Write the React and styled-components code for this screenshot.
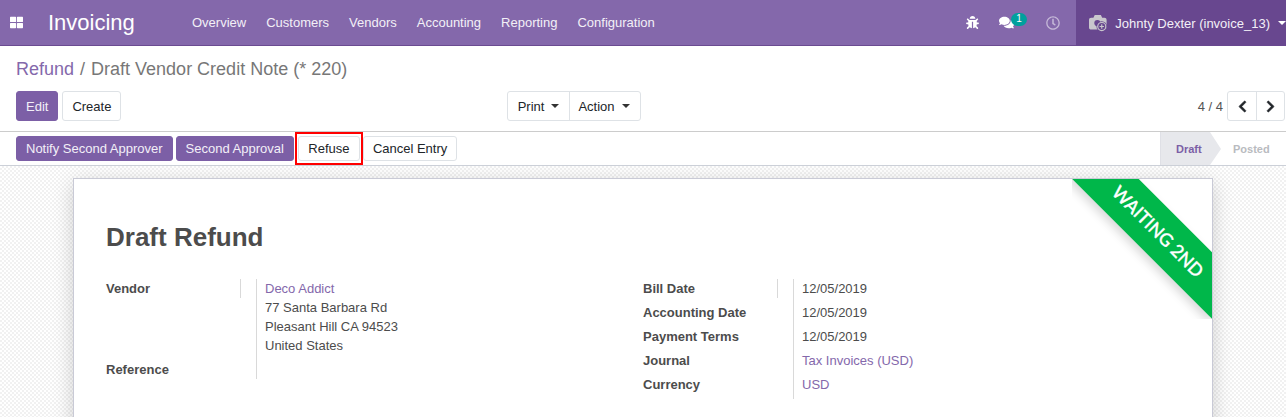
import React from 'react';
import styled, { createGlobalStyle } from 'styled-components';
import { FaBug, FaComments, FaRegClock, FaThLarge, FaChevronLeft, FaChevronRight } from 'react-icons/fa';

const GlobalStyle = createGlobalStyle`
  html, body {
    margin: 0;
    height: 417px;
    overflow: hidden;
    font-family: "Liberation Sans", Arial, sans-serif;
    font-size: 13px;
    color: #4c4c4c;
    background: #fff;
  }
  * { box-sizing: border-box; }
`;

const Navbar = styled.header`
  display: flex;
  align-items: stretch;
  height: 46px;
  background: #8468ab;
  border-bottom: 1px solid #6b4b91;
  color: #fff;
`;

const AppsIcon = styled.span`
  display: flex;
  align-items: center;
  padding-left: 10px;
  width: 48px;
  font-size: 13px;
`;

const Brand = styled.span`
  align-self: center;
  width: 144px;
  font-size: 22px;
  line-height: 24px;
`;

const Menu = styled.nav`
  display: flex;
  align-items: center;
  column-gap: 20px;
  flex: 1;
`;

const MenuItem = styled.span`
  font-size: 13px;
  color: #f3f0f7;
`;

const Systray = styled.div`
  display: flex;
  align-items: center;
  width: 110px;
  position: relative;
`;

const TrayIcon = styled.span`
  position: relative;
  display: flex;
  margin-left: ${(p) => p.$left}px;
  color: ${(p) => p.$color || '#fff'};
  font-size: ${(p) => p.$size || 13}px;
`;

const Badge = styled.span`
  position: absolute;
  top: -2px;
  left: 12px;
  width: 16px;
  height: 13px;
  border-radius: 7px;
  background: #00a09d;
  color: #fff;
  font-size: 10px;
  line-height: 12px;
  text-align: center;
`;

const UserMenu = styled.div`
  display: flex;
  align-items: center;
  width: 210px;
  padding-left: 13px;
  background: #68478f;
  color: #f3f0f7;
  margin-bottom: -1px;
  white-space: nowrap;
`;

const UserName = styled.span`
  margin-left: 7px;
`;

const Caret = styled.span`
  display: inline-block;
  width: 0;
  height: 0;
  margin-left: ${(p) => p.$left || 7}px;
  border-top: 4px solid ${(p) => p.$color || '#333'};
  border-left: 4px solid transparent;
  border-right: 4px solid transparent;
  vertical-align: middle;
`;

const ControlPanel = styled.section`
  height: 86px;
  padding: 0 1px 0 16px;
  background: #fff;
  border-bottom: 1px solid #ccc;
`;

const Breadcrumb = styled.div`
  padding-top: 13px;
  height: 45px;
  font-size: 18px;
  line-height: 20px;
  color: #777;
`;

const CrumbLink = styled.span`
  color: #8468ab;
`;

const CrumbSep = styled.span`
  margin: 0 6px;
`;

const ButtonRow = styled.div`
  display: grid;
  grid-template-columns: 491px auto 1fr;
  align-items: center;
`;

const Group = styled.div`
  display: flex;
  justify-content: ${(p) => p.$end ? 'flex-end' : 'flex-start'};
  align-items: center;
  column-gap: ${(p) => p.$gap || 0}px;
`;

const Button = styled.button`
  height: ${(p) => p.$h || 30}px;
  min-width: ${(p) => p.$min || 0}px;
  padding: 0 9px;
  font: inherit;
  border-radius: 3px;
  border: 1px solid ${(p) => p.$primary ? '#7c5fa6' : '#dee2e6'};
  background: ${(p) => p.$primary ? '#7c5fa6' : '#fff'};
  color: ${(p) => p.$primary ? '#f3eff8' : '#212529'};
  white-space: nowrap;
`;

const Joined = styled.div`
  display: flex;
  border: 1px solid #dee2e6;
  border-radius: 3px;
`;

const JoinedCell = styled.span`
  display: flex;
  align-items: center;
  justify-content: center;
  height: 28px;
  width: ${(p) => p.$w}px;
  padding-right: ${(p) => p.$pr || 0}px;
  color: #212529;
  font-size: ${(p) => p.$size || 13}px;
  & + & { border-left: 1px solid #dee2e6; }
  svg {
    stroke: currentColor;
    stroke-width: 24;
  }
`;

const Pager = styled.span`
  margin-right: 4px;
  color: #555;
`;

const StatusBar = styled.section`
  display: flex;
  justify-content: space-between;
  height: 34px;
  padding-left: 16px;
  background: #fff;
  border-bottom: 1px solid #ccd0d8;
`;

const ActionButtons = styled.div`
  display: flex;
  align-items: center;
  column-gap: 3px;
`;

const Highlight = styled.span`
  display: flex;
  padding: 2px 1px;
  margin-left: -2px;
  margin-right: -3px;
  border: 2px solid #f00;
`;

const Steps = styled.div`
  display: flex;
  width: 126px;
  font-size: 11px;
  font-weight: 700;
`;

const ActiveStep = styled.span`
  position: relative;
  display: flex;
  align-items: center;
  width: 50px;
  padding-left: 15px;
  background: #e7e8ec;
  border-left: 1px solid #dfe0e6;
  color: #7c5fa6;
  &::after {
    content: '';
    position: absolute;
    top: 0;
    left: 49px;
    border-left: 11px solid #e7e8ec;
    border-top: 17px solid transparent;
    border-bottom: 16px solid transparent;
  }
`;

const IdleStep = styled.span`
  display: flex;
  align-items: center;
  padding-left: 23px;
  color: #b9bbc0;
`;

const SheetArea = styled.main`
  height: 251px;
  padding: 13px 73px 0 73px;
  background-color: #fff;
  background-image: repeating-conic-gradient(#f1f1f1 0 25%, #fff 0 50%);
  background-size: 4px 4px;
  overflow: hidden;
`;

const Sheet = styled.article`
  position: relative;
  height: 300px;
  margin-top: -1px;
  padding: 41px 32px 0 32px;
  background: #fff;
  border: 1px solid #c9cad6;
  box-shadow: 0 5px 20px -1px rgba(0, 0, 0, 0.2);
`;

const RibbonClip = styled.div`
  position: absolute;
  top: 0;
  right: 0;
  width: 140px;
  height: 140px;
  overflow: hidden;
`;

const Ribbon = styled.span`
  position: absolute;
  left: -14px;
  top: 29px;
  width: 200px;
  height: 47px;
  transform: rotate(45deg);
  background: #00b74a;
  box-shadow: 0 5px 10px rgba(0, 0, 0, 0.15);
  color: #fff;
  font-family: Lato, sans-serif;
  font-size: 18px;
  font-weight: 500;
  -webkit-text-stroke: 0.3px #fff;
  line-height: 47px;
  text-align: center;
`;

const Title = styled.h1`
  margin: 0 0 25px;
  font-size: 26px;
  line-height: 34px;
  font-weight: 700;
  color: #4c4c4c;
`;

const Columns = styled.div`
  display: grid;
  grid-template-columns: 537px 1fr;
`;

const Field = styled.div`
  display: grid;
  grid-template-columns: ${(p) => p.$label}px 1fr;
`;

const Labels = styled.div`
  display: flex;
  flex-direction: column;
`;

const Label = styled.label`
  height: 24px;
  line-height: 19px;
  font-weight: 700;
  &:first-child {
    height: ${(p) => p.$first || 24}px;
  }
`;

const Divider = styled.span`
  position: absolute;
  top: 0;
  left: ${(p) => p.$left}px;
  width: 1px;
  height: 19px;
  background: #d9d9d9;
`;

const Values = styled.div`
  display: flex;
  flex-direction: column;
  padding-left: 8px;
  border-left: 1px solid #d9d9d9;
  height: ${(p) => p.$h}px;
`;

const Line = styled.span`
  height: ${(p) => p.$h || 19}px;
  line-height: 19px;
`;

const Link = styled(Line)`
  color: #8468ab;
`;

const Relative = styled.div`
  position: relative;
`;

const menu = ['Overview', 'Customers', 'Vendors', 'Accounting', 'Reporting', 'Configuration'];

const CameraAvatar = () => (
  <svg width="22" height="20" viewBox="0 0 22 20">
    <path d="M0 6.500C0 5 1 4 2.500 4H5l1.500-3h7L15 4h2.500C19 4 20 5 20 6.500V15c0 1.500-1 2.500-2.500 2.500h-15C1 17.500 0 16.500 0 15Z" fill="#c9c7cd" />
    <circle cx="9.500" cy="10" r="3.500" fill="#68478f" />
    <circle cx="14.500" cy="14" r="6" fill="#68478f" />
    <circle cx="14.500" cy="14" r="4.600" fill="none" stroke="#c9c7cd" strokeWidth="1.300" />
    <path d="M14.500 11.500v5M12 14h5" stroke="#c9c7cd" strokeWidth="1.300" />
  </svg>
);

const App = () => {
  return (
    <>
      <GlobalStyle />
      <Navbar>
        <AppsIcon><FaThLarge /></AppsIcon>
        <Brand>Invoicing</Brand>
        <Menu>
          {menu.map((item) => <MenuItem key={item}>{item}</MenuItem>)}
        </Menu>
        <Systray>
          <TrayIcon $left={0}><FaBug /></TrayIcon>
          <TrayIcon $left={20} $size={15}><FaComments /><Badge>1</Badge></TrayIcon>
          <TrayIcon $left={32} $color="#c5b8d8" $size={14}><FaRegClock /></TrayIcon>
        </Systray>
        <UserMenu>
          <CameraAvatar />
          <UserName>Johnty Dexter (invoice_13)</UserName>
          <Caret $color="#fff" $left={8} />
        </UserMenu>
      </Navbar>
      <ControlPanel>
        <Breadcrumb>
          <CrumbLink>Refund</CrumbLink><CrumbSep>/</CrumbSep>Draft Vendor Credit Note (* 220)
        </Breadcrumb>
        <ButtonRow>
          <Group $gap={4}>
            <Button $primary>Edit</Button>
            <Button>Create</Button>
          </Group>
          <Joined>
            <JoinedCell $w={61}>Print<Caret /></JoinedCell>
            <JoinedCell $w={71} $pr={2}>Action<Caret /></JoinedCell>
          </Joined>
          <Group $end>
            <Pager>4 / 4</Pager>
            <Joined>
              <JoinedCell $w={28}><FaChevronLeft /></JoinedCell>
              <JoinedCell $w={28}><FaChevronRight /></JoinedCell>
            </Joined>
          </Group>
        </ButtonRow>
      </ControlPanel>
      <StatusBar>
        <ActionButtons>
          <Button $primary $h={25}>Notify Second Approver</Button>
          <Button $primary $h={25}>Second Approval</Button>
          <Highlight><Button $h={25} $min={62}>Refuse</Button></Highlight>
          <Button $h={25} $min={94}>Cancel Entry</Button>
        </ActionButtons>
        <Steps>
          <ActiveStep>Draft</ActiveStep>
          <IdleStep>Posted</IdleStep>
        </Steps>
      </StatusBar>
      <SheetArea>
        <Sheet>
          <RibbonClip><Ribbon>WAITING 2ND</Ribbon></RibbonClip>
          <Title>Draft Refund</Title>
          <Columns>
            <Relative>
              <Divider $left={134} />
              <Field $label={150}>
                <Labels>
                  <Label $first={81}>Vendor</Label>
                  <Label>Reference</Label>
                </Labels>
                <Values $h={100}>
                  <Link>Deco Addict</Link>
                  <Line>77 Santa Barbara Rd</Line>
                  <Line>Pleasant Hill CA 94523</Line>
                  <Line>United States</Line>
                </Values>
              </Field>
            </Relative>
            <Relative>
              <Divider $left={134} />
              <Field $label={150}>
                <Labels>
                  <Label>Bill Date</Label>
                  <Label>Accounting Date</Label>
                  <Label>Payment Terms</Label>
                  <Label>Journal</Label>
                  <Label>Currency</Label>
                </Labels>
                <Values $h={120}>
                  <Line $h={24}>12/05/2019</Line>
                  <Line $h={24}>12/05/2019</Line>
                  <Line $h={24}>12/05/2019</Line>
                  <Link $h={24}>Tax Invoices (USD)</Link>
                  <Link $h={24}>USD</Link>
                </Values>
              </Field>
            </Relative>
          </Columns>
        </Sheet>
      </SheetArea>
    </>
  );
};

export default App;
